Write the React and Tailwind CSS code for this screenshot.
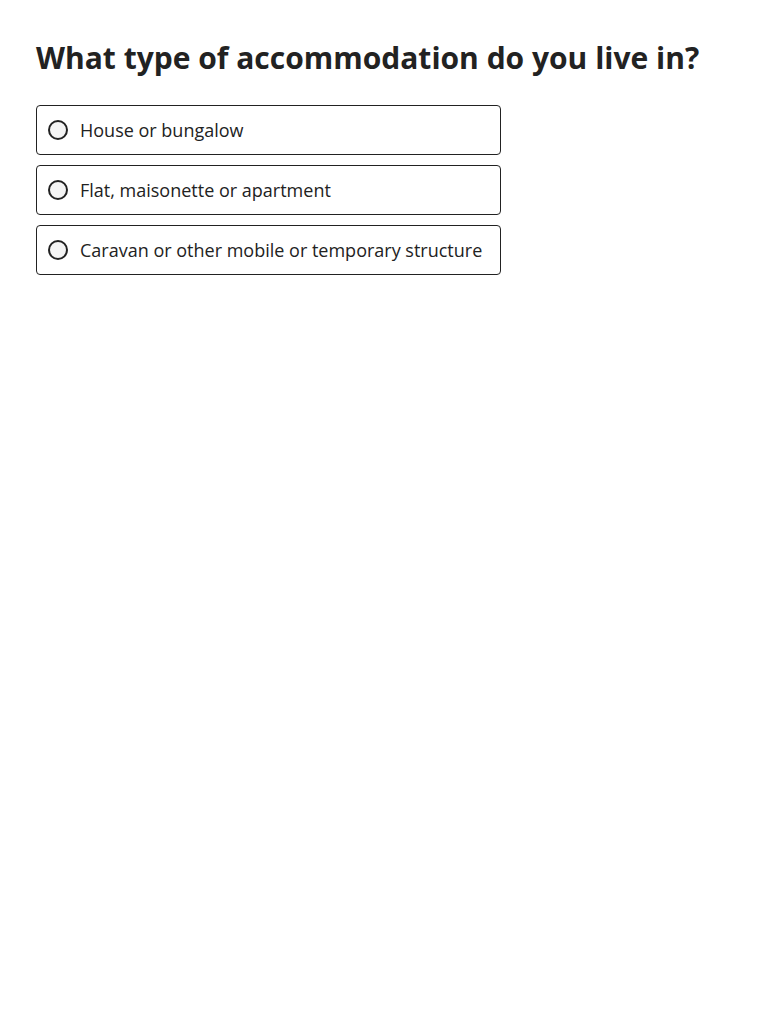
export default function App() {
  const options = [
    "House or bungalow",
    "Flat, maisonette or apartment",
    "Caravan or other mobile or temporary structure",
  ];
  return (
    <div className="min-h-screen bg-white px-9 pt-[36px] text-[#222222]" style={{ fontFamily: '"Open Sans", sans-serif' }}>
      <h1 className="text-[30px] font-bold leading-[44px] text-[#222222]">What type of accommodation do you live in?</h1>
      <div className="mt-[25px] flex w-[465px] flex-col gap-[10px]">
        {options.map((o) => (
          <label key={o} className="flex h-[50px] items-center gap-[12px] rounded-[4px] border border-[#222222] pl-[11px] pr-3">
            <span className="h-[20px] w-[20px] shrink-0 rounded-full border-2 border-[#222222] bg-[#f4f4f4]" />
            <span className="text-[18px] leading-6 text-[#222222]">{o}</span>
          </label>
        ))}
      </div>
    </div>
  );
}
